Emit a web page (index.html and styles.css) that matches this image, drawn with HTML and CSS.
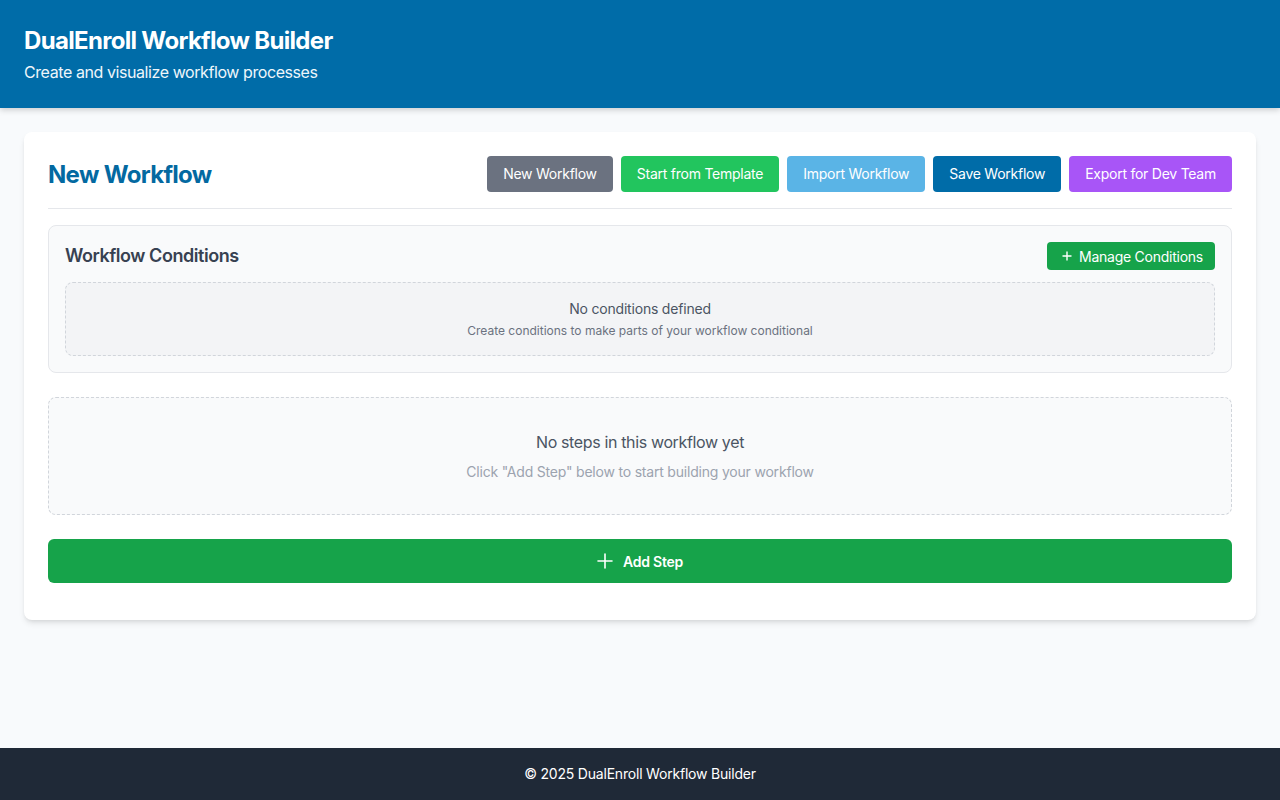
FILE: index.html
```html
<!DOCTYPE html>
<html lang="en">
<head>
<meta charset="utf-8">
<title>DualEnroll Workflow Builder</title>
<link rel="stylesheet" href="styles.css">
</head>
<body>
<div class="page">
  <header class="site-header">
    <h1 class="site-title">DualEnroll Workflow Builder</h1>
    <p class="site-subtitle">Create and visualize workflow processes</p>
  </header>
  <main class="main">
    <section class="card">
      <div class="card-top">
        <h2 class="wf-title">New Workflow</h2>
        <div class="actions">
          <button class="btn btn-gray">New Workflow</button>
          <button class="btn btn-green">Start from Template</button>
          <button class="btn btn-sky">Import Workflow</button>
          <button class="btn btn-blue">Save Workflow</button>
          <button class="btn btn-purple">Export for Dev Team</button>
        </div>
      </div>
      <div class="conditions">
        <div class="cond-head">
          <h3 class="cond-title">Workflow Conditions</h3>
          <button class="btn-small">
            <svg width="10" height="10" viewBox="0 0 10 10" aria-hidden="true"><path d="M5 0.5v9M0.5 5h9" stroke="#fff" stroke-width="1.4" fill="none"/></svg>
            <span>Manage Conditions</span>
          </button>
        </div>
        <div class="cond-empty">
          <p class="cond-empty-title">No conditions defined</p>
          <p class="cond-empty-sub">Create conditions to make parts of your workflow conditional</p>
        </div>
      </div>
      <div class="steps-empty">
        <p class="steps-title">No steps in this workflow yet</p>
        <p class="steps-sub">Click "Add Step" below to start building your workflow</p>
      </div>
      <div class="add-wrap">
        <button class="btn-add">
          <svg width="16" height="16" viewBox="0 0 16 16" aria-hidden="true"><path d="M8 1v14M1 8h14" stroke="#fff" stroke-width="1.6" fill="none" stroke-linecap="round"/></svg>
          <span>Add Step</span>
        </button>
      </div>
    </section>
  </main>
  <footer class="site-footer">© 2025 DualEnroll Workflow Builder</footer>
</div>
</body>
</html>
```
FILE: styles.css
```css
* { box-sizing: border-box; }
html, body { margin: 0; padding: 0; }
body {
  font-family: Inter, "Noto Sans", "Liberation Sans", sans-serif;
  background: #f8fafc;
  color: #1f2937;
  letter-spacing: -0.2px;
}
p, h1, h2, h3 { margin: 0; }
button { font-family: inherit; cursor: pointer; border: 0; letter-spacing: -0.25px; }

.page { min-height: 100vh; display: flex; flex-direction: column; }

.site-header {
  background: #006ca8;
  color: #fff;
  padding: 25px 24px 24px;
  box-shadow: 0 2px 6px rgba(0,0,0,0.18);
  position: relative;
  z-index: 1;
}
.site-title { font-size: 24px; line-height: 32px; font-weight: 700; letter-spacing: -0.68px; }
.site-subtitle { font-size: 16px; line-height: 24px; margin-top: 3px; color: #eef6fb; letter-spacing: -0.42px; }

.main { flex: 1; padding: 24px; }

.card {
  background: #fff;
  border-radius: 8px;
  box-shadow: 0 4px 6px -1px rgba(0,0,0,0.1), 0 2px 4px -2px rgba(0,0,0,0.1);
  padding: 24px 24px 37px;
}

.card-top {
  display: flex;
  align-items: center;
  justify-content: space-between;
  padding-bottom: 16px;
  border-bottom: 1px solid #e5e7eb;
}
.wf-title { font-size: 24px; line-height: 32px; font-weight: 700; color: #0369a1; letter-spacing: -0.68px; padding-top: 2px; }
.actions { display: flex; gap: 8px; }
.btn {
  height: 36px;
  padding: 0 16px;
  border-radius: 4px;
  color: #fff;
  font-size: 14px;
  line-height: 20px;
}
.btn-gray { background: #6b7280; }
.btn-green { background: #22c55e; }
.btn-sky { background: #5ab4e6; }
.btn-blue { background: #006ca8; }
.btn-purple { background: #a855f7; }

.conditions {
  margin-top: 16px;
  background: #f9fafb;
  border: 1px solid #e5e7eb;
  border-radius: 8px;
  padding: 16px;
}
.cond-head { display: flex; align-items: center; justify-content: space-between; }
.cond-title { font-size: 18px; line-height: 28px; font-weight: 600; color: #374151; letter-spacing: -0.45px; }
.btn-small {
  height: 28px;
  padding: 0 12px 0 15px;
  border-radius: 4px;
  background: #16a34a;
  color: #fff;
  font-size: 14px;
  display: flex;
  align-items: center;
  gap: 7px;
}
.cond-empty {
  margin-top: 12px;
  background: #f3f4f6;
  border: 1px dashed #d1d5db;
  border-radius: 8px;
  padding: 16px;
  text-align: center;
}
.cond-empty-title { font-size: 14px; line-height: 20px; color: #4b5563; }
.cond-empty-sub { font-size: 12px; line-height: 16px; color: #6b7280; margin-top: 4px; letter-spacing: 0; }

.steps-empty {
  margin-top: 24px;
  background: #f9fafb;
  border: 1px dashed #d1d5db;
  border-radius: 8px;
  padding: 32px;
  text-align: center;
}
.steps-title { font-size: 16px; line-height: 24px; color: #4b5563; letter-spacing: -0.36px; }
.steps-sub { font-size: 14px; line-height: 20px; color: #9ca3af; margin-top: 8px; }

.add-wrap { margin-top: 24px; }
.btn-add {
  width: 100%;
  height: 44px;
  border-radius: 6px;
  background: #16a34a;
  color: #fff;
  font-size: 14px;
  font-weight: 600;
  display: flex;
  align-items: center;
  justify-content: center;
  gap: 10px;
}

.site-footer {
  background: #1f2937;
  color: #fff;
  text-align: center;
  font-size: 14px;
  line-height: 20px;
  padding: 16px;
}
```
